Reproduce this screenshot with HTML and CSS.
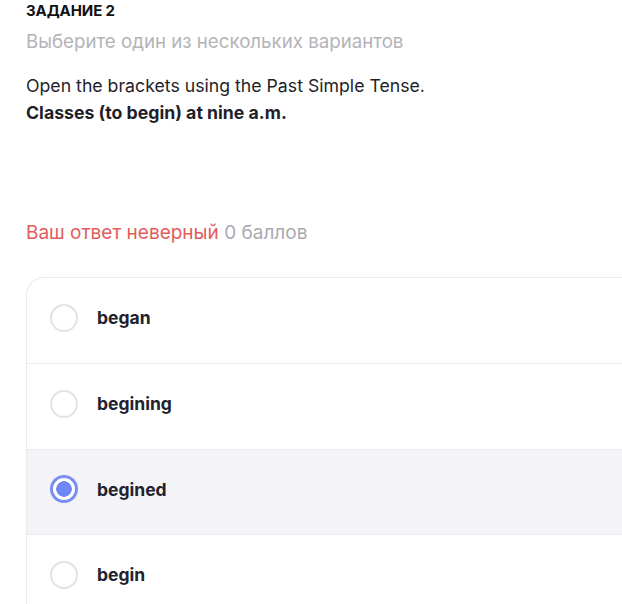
FILE: index.html
```html
<!DOCTYPE html>
<html lang="ru">
<head>
<meta charset="utf-8">
<link rel="stylesheet" href="styles.css">
</head>
<body>
<div class="page">
  <div class="task-title">ЗАДАНИЕ 2</div>
  <div class="task-sub">Выберите один из нескольких вариантов</div>
  <div class="question">
    <p>Open the brackets using the Past Simple Tense.</p>
    <p class="bold">Classes (to begin) at nine a.m.</p>
  </div>
  <div class="result"><span class="wrong">Ваш ответ неверный</span> <span class="points">0 баллов</span></div>
  <div class="options">
    <div class="option"><span class="radio"></span><span class="label">began</span></div>
    <div class="option"><span class="radio"></span><span class="label">begining</span></div>
    <div class="option selected"><span class="radio"></span><span class="label">begined</span></div>
    <div class="option"><span class="radio"></span><span class="label">begin</span></div>
  </div>
</div>
</body>
</html>
```
FILE: styles.css
```css
html, body {
  margin: 0;
  padding: 0;
  background: #ffffff;
}
body {
  font-family: Inter, "Noto Sans", sans-serif;
  color: #1f1f29;
  overflow: hidden;
}
.page {
  padding: 2px 0 0 26px;
}
.task-title {
  font-size: 15px;
  font-weight: 700;
  line-height: 18px;
  color: #111111;
  letter-spacing: -0.1px;
}
.task-sub {
  margin-top: 10px;
  font-size: 18.7px;
  line-height: 24px;
  color: #b3b3b8;
}
.question {
  margin-top: 18px;
  font-size: 17.7px;
  line-height: 27px;
  color: #1f1f29;
}
.question p {
  margin: 0;
}
.question .bold {
  font-weight: 700;
}
.result {
  margin-top: 95px;
  font-size: 19px;
  line-height: 24px;
}
.wrong {
  color: #e25c5c;
}
.points {
  color: #a9a9b0;
}
.options {
  margin-top: 32px;
  border: 1px solid #ebebef;
  border-right: none;
  border-bottom: none;
  border-top-left-radius: 18px;
  overflow: hidden;
}
.option {
  box-sizing: border-box;
  display: flex;
  align-items: center;
  height: 86px;
  padding: 0 0 6px 23px;
  border-bottom: 1px solid #ebebef;
  gap: 19px;
}
.option:nth-child(3) {
  height: 85px;
}
.option.selected {
  background: #f4f4f8;
}
.radio {
  box-sizing: border-box;
  width: 28px;
  height: 28px;
  border-radius: 50%;
  border: 2px solid #e3e3e5;
  background: #ffffff;
  flex: none;
}
.option.selected .radio {
  border: 3px solid #7b8ff0;
  background: radial-gradient(circle, #6f86f5 0 7.5px, #ffffff 8px);
}
.label {
  font-size: 17.5px;
  font-weight: 700;
  color: #22222d;
}
```
